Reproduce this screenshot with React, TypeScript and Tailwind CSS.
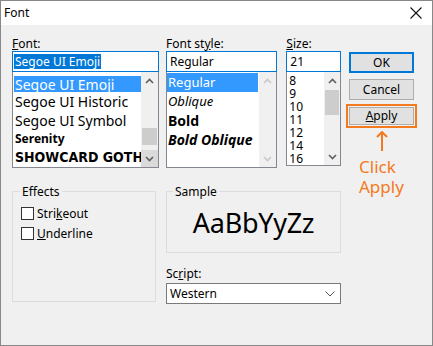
type FontItem = {
  name: string
  h: string
  cls: string
  selected?: boolean
}

const fonts: FontItem[] = [
  { name: "Segoe UI Emoji", h: "h-[16px]", cls: "text-[14px]", selected: true },
  { name: "Segoe UI Historic", h: "h-[19px]", cls: "text-[14px]" },
  { name: "Segoe UI Symbol", h: "h-[19px]", cls: "text-[14px]" },
  { name: "Serenity", h: "h-[18px]", cls: "text-[12px] font-bold" },
  { name: "SHOWCARD GOTHIC", h: "h-[19px]", cls: "text-[14px] font-black [font-family:'DejaVu_Sans_Condensed','DejaVu_Sans',sans-serif]" },
]

const styles: FontItem[] = [
  { name: "Regular", h: "h-[19px]", cls: "", selected: true },
  { name: "Oblique", h: "h-[19px]", cls: "italic" },
  { name: "Bold", h: "h-[19px]", cls: "font-bold text-[14px]" },
  { name: "Bold Oblique", h: "h-[19px]", cls: "font-bold italic text-[14px]" },
]

const sizes = ["8", "9", "10", "11", "12", "14", "16"]

function Chevron({ up, color = "#606060" }: { up?: boolean; color?: string }) {
  return (
    <svg width="9" height="6" viewBox="0 0 9 6">
      <polyline
        points={up ? "1,5 4.5,1.5 8,5" : "1,1 4.5,4.5 8,1"}
        fill="none"
        stroke={color}
        strokeWidth="1.6"
      />
    </svg>
  )
}

function ScrollBar({
  thumbTop,
  thumbH,
  disabled,
  w = "w-[17px]",
  downActive,
}: {
  thumbTop?: string
  thumbH?: string
  disabled?: boolean
  w?: string
  downActive?: boolean
}) {
  const c = disabled ? "#c8c8c8" : "#606060"
  return (
    <div className={`flex h-full ${w} shrink-0 flex-col bg-[#f0f0f0]`}>
      <div className="flex h-[17px] shrink-0 items-center justify-center">
        <Chevron up color={c} />
      </div>
      <div className="flex-1">
        {thumbTop && <div className={`${thumbTop} ${thumbH} mx-[1px] bg-[#cdcdcd]`} />}
      </div>
      <div className={`flex h-[17px] shrink-0 items-center justify-center ${downActive ? "bg-[#dadada]" : ""}`}>
        <Chevron color={c} />
      </div>
    </div>
  )
}

export default function App() {
  return (
    <div className="flex h-[346px] w-[433px] flex-col border border-[#888888] bg-[#f0f0f0] text-[12px] text-black [font-family:'Noto_Sans',sans-serif]">
      <div className="flex h-[24px] shrink-0 items-center justify-between bg-white pl-[3px] pr-[10px]">
        <span className="text-[12px] leading-none">Font</span>
        <svg width="12" height="12" viewBox="0 0 12 12">
          <path d="M0.5 0.5 L11.5 11.5 M11.5 0.5 L0.5 11.5" stroke="#111" strokeWidth="1.1" />
        </svg>
      </div>

      <div className="flex pl-[11px] pt-[11px]">
        {/* left area: lists + effects/sample */}
        <div className="flex w-[329px] flex-col">
          <div className="flex">
            <div className="flex w-[147px] flex-col">
              <div className="h-[15px] leading-[15px]">
                <span className="underline">F</span>ont:
              </div>
              <div className="flex h-[21px] items-center border border-[#0078d7] bg-white pl-[1px]">
                <span className="bg-[#0078d7] px-[1px] leading-[15px] text-white">Segoe UI Emoji</span>
              </div>
              <div className="flex h-[96px] border border-t-0 border-[#828790] bg-white">
                <div className="flex flex-1 flex-col overflow-hidden pl-[1px] pt-[4px]">
                  {fonts.map((f) => (
                    <div
                      key={f.name}
                      className={`${f.h} flex shrink-0 items-center whitespace-nowrap pl-[1px] ${f.cls} ${
                        f.selected ? "bg-[#3399ff] text-white" : ""
                      }`}
                    >
                      {f.name}
                    </div>
                  ))}
                </div>
                <ScrollBar thumbTop="mt-[39px]" thumbH="h-[17px]" downActive />
              </div>
            </div>

            <div className="ml-[7px] flex w-[112px] flex-col">
              <div className="h-[15px] leading-[15px]">
                Font st<span className="underline">y</span>le:
              </div>
              <div className="flex h-[21px] items-center border border-[#0078d7] bg-white pl-[3px]">
                Regular
              </div>
              <div className="flex h-[96px] border border-t-0 border-[#828790] bg-white">
                <div className="flex flex-1 flex-col overflow-hidden pt-[1px] pr-[1px] text-[13px]">
                  {styles.map((s) => (
                    <div
                      key={s.name}
                      className={`${s.h} flex shrink-0 items-center whitespace-nowrap pl-[1px] ${s.cls} ${
                        s.selected ? "bg-[#3399ff] text-white" : ""
                      }`}
                    >
                      {s.name}
                    </div>
                  ))}
                </div>
                <ScrollBar disabled />
              </div>
            </div>

            <div className="ml-[9px] flex w-[55px] flex-col">
              <div className="h-[15px] leading-[15px]">
                <span className="underline">S</span>ize:
              </div>
              <div className="flex h-[21px] items-center border border-[#0078d7] bg-white pl-[3px]">21</div>
              <div className="flex h-[94px] border border-t-0 border-[#828790] bg-white">
                <div className="flex flex-1 flex-col overflow-hidden pl-[2px] pt-[2px]">
                  {sizes.map((s) => (
                    <div key={s} className="h-[13px] shrink-0 leading-[13px]">
                      {s}
                    </div>
                  ))}
                </div>
                <ScrollBar w="w-[16px]" thumbTop="mt-[1px]" thumbH="h-[25px]" />
              </div>
            </div>
          </div>

          <div className="mt-[16px] flex">
            <fieldset className="h-[118px] w-[144px] border border-[#dcdcdc] pl-[8px]">
              <legend className="ml-[-1px] px-[2px] leading-[15px]">Effects</legend>
              <div className="mt-[8px] flex h-[13px] items-center">
                <div className="h-[13px] w-[13px] border border-[#333333] bg-white" />
                <span className="ml-[3px]">
                  Stri<span className="underline">k</span>eout
                </span>
              </div>
              <div className="mt-[7px] flex h-[13px] items-center">
                <div className="h-[13px] w-[13px] border border-[#333333] bg-white" />
                <span className="ml-[3px]">
                  <span className="underline">U</span>nderline
                </span>
              </div>
            </fieldset>

            <div className="ml-[10px] flex w-[175px] flex-col">
              <fieldset className="h-[69px] border border-[#dcdcdc] pl-[6px]">
                <legend className="px-[2px] leading-[15px]">Sample</legend>
                <div className="flex h-[46px] items-center justify-center pr-[6px] pt-[3px] text-[27px] tracking-[-0.3px]">
                  AaBbYyZz
                </div>
              </fieldset>
              <div className="mt-[13px] h-[15px] leading-[15px]">
                Sc<span className="underline">r</span>ipt:
              </div>
              <div className="mt-[2px] flex h-[21px] items-center justify-between border border-[#7a7a7a] bg-white pl-[3px] pr-[5px]">
                <span>Western</span>
                <svg width="10" height="6" viewBox="0 0 10 6">
                  <polyline points="0.5,0.5 5,5 9.5,0.5" fill="none" stroke="#555" strokeWidth="1" />
                </svg>
              </div>
            </div>
          </div>
        </div>

        {/* buttons */}
        <div className="ml-[5px] flex w-[71px] flex-col pt-[16px]">
          <div className="mx-[3px] flex h-[21px] items-center justify-center border-2 border-[#0078d7] bg-[#e1e1e1]">
            OK
          </div>
          <div className="mx-[3px] mt-[6px] flex h-[21px] items-center justify-center border border-[#adadad] bg-[#e1e1e1]">
            Cancel
          </div>
          <div className="mt-[4px] h-[24px] border-2 border-[#f47a20] p-[1px]">
            <div className="flex h-full items-center justify-center border border-[#adadad] bg-[#e1e1e1]">
              <span>
                <span className="underline">A</span>pply
              </span>
            </div>
          </div>
          <div className="mt-[3px] flex justify-center pl-[1px]">
            <svg width="12" height="20" viewBox="0 0 12 20">
              <path d="M6 1 L6 20 M1 6 L6 1 L11 6" fill="none" stroke="#f47a20" strokeWidth="2" />
            </svg>
          </div>
          <div className="mt-[6px] pl-[13px] text-[17px] leading-[20px] text-[#f47a20]">
            Click
            <br />
            Apply
          </div>
        </div>
      </div>
    </div>
  )
}
